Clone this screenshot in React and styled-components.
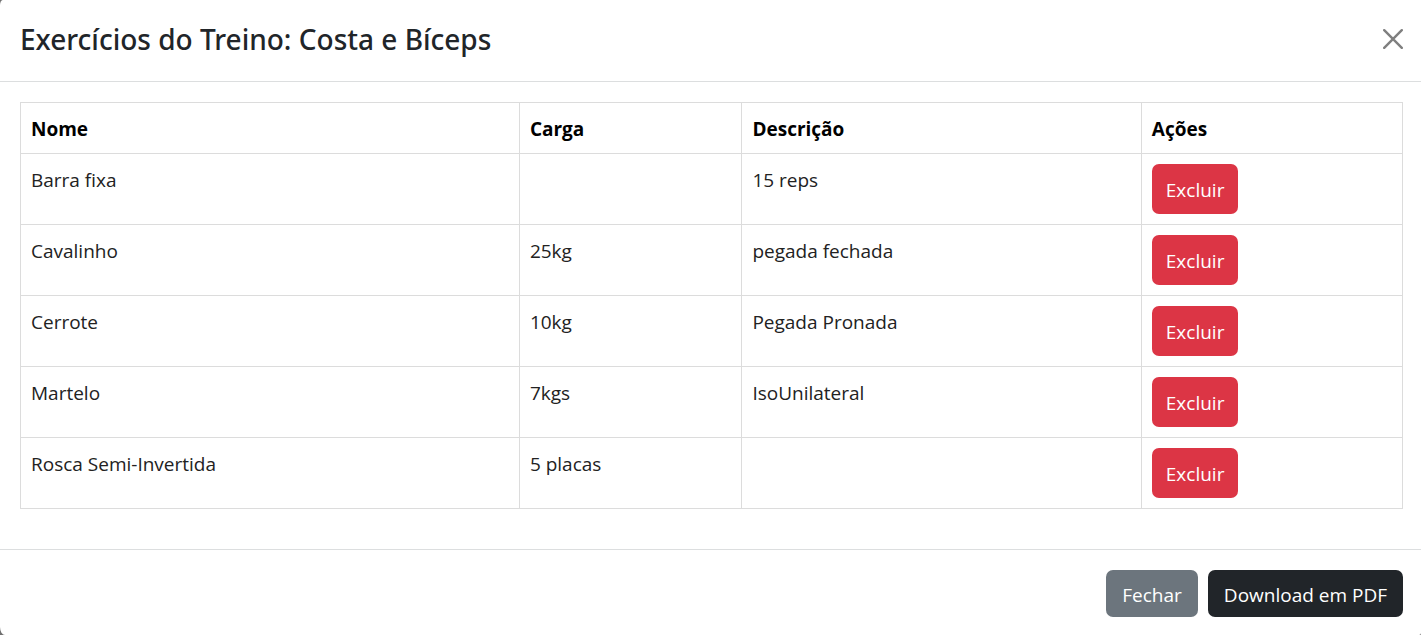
import React, { useState } from "react";
import styled, { createGlobalStyle } from "styled-components";

const GlobalStyle = createGlobalStyle`
  *, *::before, *::after { box-sizing: border-box; }
  body {
    margin: 0;
    background: #6f6f6f;
    font-family: "Open Sans", "Noto Sans", sans-serif;
    font-size: 19px;
    line-height: 30px;
    color: #212529;
  }
`;

const Modal = styled.section`
  min-height: 100vh;
  display: flex;
  flex-direction: column;
  background: #fff;
  border-radius: 3px 0 2px 5px / 5px 0 2px 8px;
`;

const Header = styled.header`
  display: flex;
  align-items: center;
  justify-content: space-between;
  padding: 18px 18px 22px 20px;
  border-bottom: 1px solid #dcdedf;
`;

const Title = styled.h1`
  margin: 0;
  padding-top: 1px;
  font-family: "Noto Sans", "Open Sans", sans-serif;
  font-size: 28px;
  line-height: 40px;
  font-weight: 500;
`;

const CloseButton = styled.button`
  display: flex;
  padding: 0;
  border: 0;
  background: none;
  color: #7f7f7f;
  cursor: pointer;
`;

const Body = styled.div`
  padding: 20px 18px 20px 20px;
`;

const Table = styled.table`
  width: 100%;
  margin-bottom: 20px;
  table-layout: fixed;
  border-collapse: collapse;
`;

const cell = `
  border: 1px solid #dcdcdc;
  text-align: left;
  vertical-align: top;
`;

const HeadCell = styled.th`
  ${cell}
  width: ${(p) => p.$width};
  padding: 11px 10px 9px;
  color: #000;
  font-weight: 700;
`;

const Cell = styled.td`
  ${cell}
  padding: ${(p) => (p.$action ? "10px" : "11px 10px 9px")};
  color: #222;
`;

const tones = {
  danger: "#dc3545",
  secondary: "#6c757d",
  dark: "#212529",
};

const Button = styled.button`
  display: block;
  padding: ${(p) => (p.$tall ? "11px 14px 9px" : "10px 16px 7px")};
  border: 0;
  border-radius: 7px;
  background: ${(p) => tones[p.$tone]};
  color: #fff;
  font: inherit;
  cursor: pointer;
`;

const Footer = styled.footer`
  display: flex;
  justify-content: flex-end;
  gap: 10px;
  padding: 20px 18px 18px 20px;
  border-top: 1px solid #dcdedf;
`;

const columns = [
  { label: "Nome", width: "36.1%" },
  { label: "Carga", width: "16.1%" },
  { label: "Descrição", width: "28.9%" },
  { label: "Ações", width: "18.9%" },
];

const initial = [
  { nome: "Barra fixa", carga: "", descricao: "15 reps" },
  { nome: "Cavalinho", carga: "25kg", descricao: "pegada fechada" },
  { nome: "Cerrote", carga: "10kg", descricao: "Pegada Pronada" },
  { nome: "Martelo", carga: "7kgs", descricao: "IsoUnilateral" },
  { nome: "Rosca Semi-Invertida", carga: "5 placas", descricao: "" },
];

export default function App() {
  const [exercises, setExercises] = useState(initial);
  const remove = (nome) => setExercises((list) => list.filter((e) => e.nome !== nome));

  return (
    <>
      <GlobalStyle />
      <Modal role="dialog" aria-labelledby="modal-title">
        <Header>
          <Title id="modal-title">Exercícios do Treino: Costa e Bíceps</Title>
          <CloseButton type="button" aria-label="Fechar janela">
            <svg width="20" height="20" viewBox="0 0 20 20" fill="none" stroke="currentColor" strokeWidth="2.4" strokeLinecap="round">
              <path d="M1.2 1.2 18.8 18.8M18.8 1.2 1.2 18.8" />
            </svg>
          </CloseButton>
        </Header>
        <Body>
          <Table>
            <thead>
              <tr>
                {columns.map((c) => (
                  <HeadCell key={c.label} scope="col" $width={c.width}>{c.label}</HeadCell>
                ))}
              </tr>
            </thead>
            <tbody>
              {exercises.map((e) => (
                <tr key={e.nome}>
                  <Cell>{e.nome}</Cell>
                  <Cell>{e.carga}</Cell>
                  <Cell>{e.descricao}</Cell>
                  <Cell $action>
                    <Button type="button" $tone="danger" $tall onClick={() => remove(e.nome)}>Excluir</Button>
                  </Cell>
                </tr>
              ))}
            </tbody>
          </Table>
        </Body>
        <Footer>
          <Button type="button" $tone="secondary">Fechar</Button>
          <Button type="button" $tone="dark">Download em PDF</Button>
        </Footer>
      </Modal>
    </>
  );
}
